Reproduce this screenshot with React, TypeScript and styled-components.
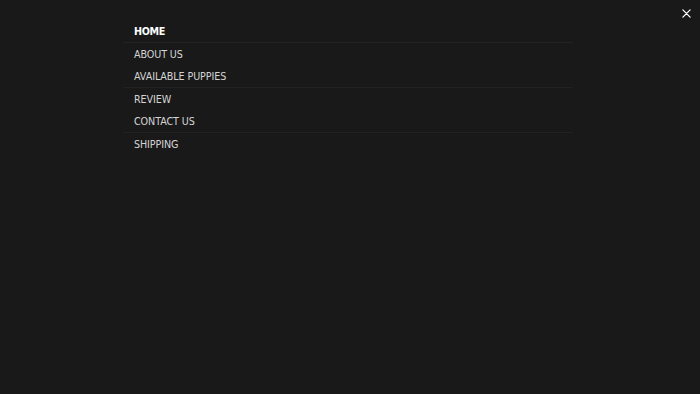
import React from 'react';
import styled, { createGlobalStyle } from 'styled-components';

const GlobalStyle = createGlobalStyle`
    html, body {
        margin: 0;
        padding: 0;
        height: 100%;
        background-color: #191919;
    }
    #root {
        height: 100%;
    }
`

const Overlay = styled.div`
    display: flex;
    justify-content: space-between;
    width: 100%;
    height: 100vh;
    background-color: #191919;
    box-sizing: border-box;
    padding-left: 123px;
`
const NavList = styled.ul`
    list-style: none;
    margin: 0;
    padding: 20px 0 0 0;
    width: 450px;
`
const NavItem = styled.li<{ $divider?: boolean }>`
    height: 22.5px;
    line-height: 19px;
    padding-left: 11px;
    box-sizing: border-box;
    border-bottom: 1px solid ${p => p.$divider ? '#222222' : 'transparent'};
`
const NavLink = styled.a<{ $active?: boolean }>`
    font-family: "DejaVu Sans", sans-serif;
    font-size: 9.6px;
    letter-spacing: ${p => p.$active ? '-0.35px' : '-0.1px'};
    font-weight: ${p => p.$active ? 700 : 400};
    color: ${p => p.$active ? '#ffffff' : '#d4d4d4'};
    text-decoration: none;
    text-transform: uppercase;
`
const CloseButton = styled.button`
    display: flex;
    align-items: center;
    justify-content: center;
    width: 20px;
    height: 20px;
    margin: 3px 4px 0 0;
    padding: 0;
    background: none;
    border: none;
    color: #ffffff;
`

const items = [
    { label: 'Home', active: true, divider: true },
    { label: 'About us' },
    { label: 'Available puppies', divider: true },
    { label: 'Review' },
    { label: 'Contact us', divider: true },
    { label: 'Shipping' },
];

const App: React.FC = () => {
    return (
        <>
            <GlobalStyle />
            <Overlay>
                <NavList>
                    {items.map(item => (
                        <NavItem key={item.label} $divider={item.divider}>
                            <NavLink href="#" $active={item.active}>{item.label}</NavLink>
                        </NavItem>
                    ))}
                </NavList>
                <CloseButton aria-label="Close">
                    <svg width="9" height="9" viewBox="0 0 10 10" fill="none" stroke="currentColor" strokeWidth="1.4" strokeLinecap="round">
                        <path d="M1 1L9 9M9 1L1 9" />
                    </svg>
                </CloseButton>
            </Overlay>
        </>
    );
}

export default App;
